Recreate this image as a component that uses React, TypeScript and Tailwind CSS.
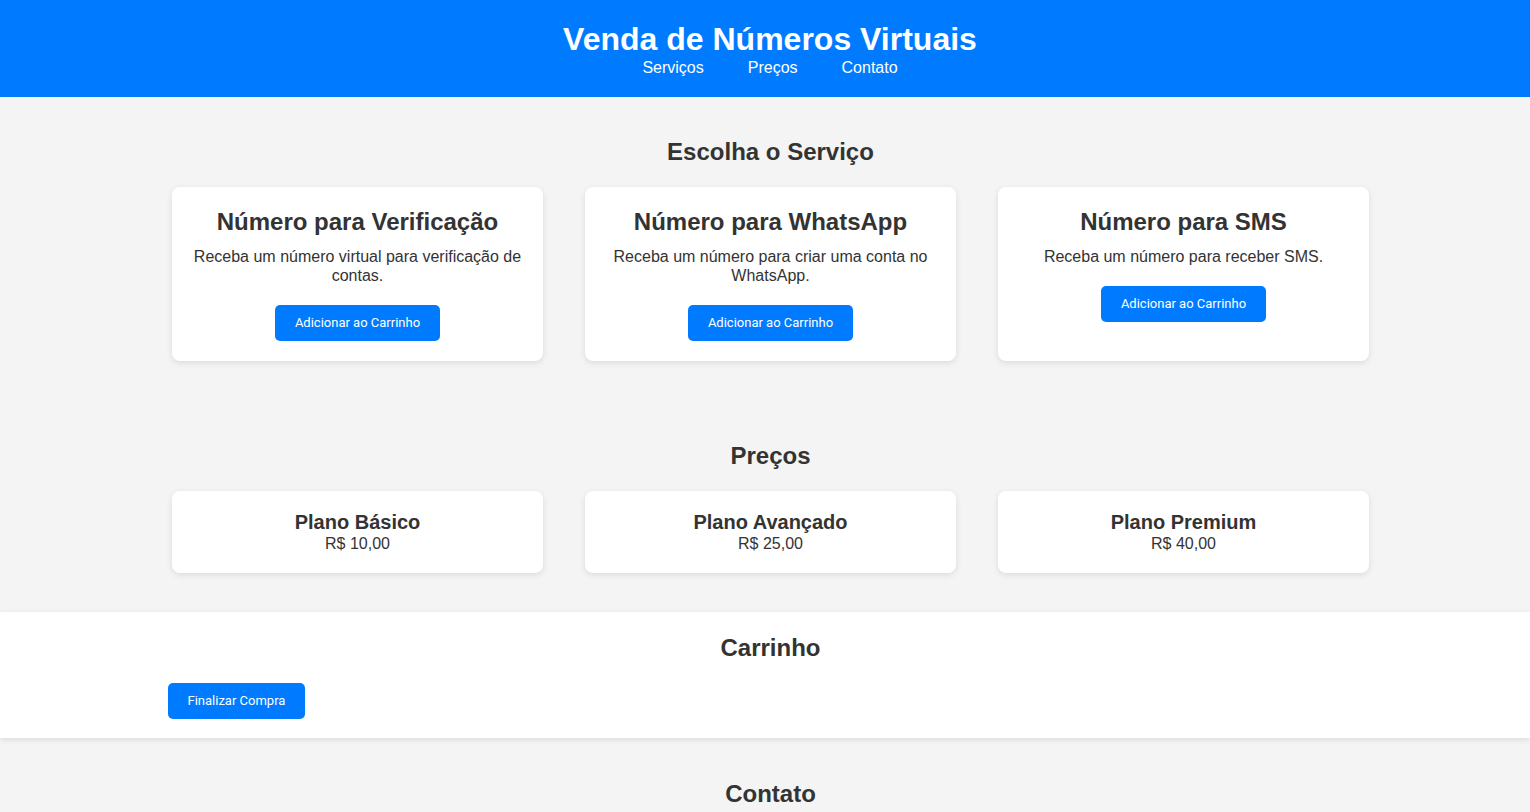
export default function App() {
  const services = [
    { title: "Número para Verificação", desc: "Receba um número virtual para verificação de contas." },
    { title: "Número para WhatsApp", desc: "Receba um número para criar uma conta no WhatsApp." },
    { title: "Número para SMS", desc: "Receba um número para receber SMS." },
  ]
  const plans = [
    { name: "Plano Básico", price: "R$ 10,00" },
    { name: "Plano Avançado", price: "R$ 25,00" },
    { name: "Plano Premium", price: "R$ 40,00" },
  ]

  return (
    <div className="min-h-screen bg-[#f4f4f4] text-[#333] font-['Liberation_Sans',Arial,sans-serif] pb-10">
      {/* Header */}
      <header className="bg-[#007bff] text-white pt-[21px] pb-5 pl-[10px] text-center">
        <h1 className="text-[32px] leading-[37px] font-bold">Venda de Números Virtuais</h1>
        <nav className="flex justify-center gap-[44px] text-base leading-[19px]">
          <a href="#servicos">Serviços</a>
          <a href="#precos">Preços</a>
          <a href="#contato">Contato</a>
        </nav>
      </header>

      {/* Serviços */}
      <section id="servicos" className="pt-10 pb-10 pl-[31px] pr-5 text-center">
        <h2 className="text-2xl leading-[28px] font-bold mt-px mb-[21px]">Escolha o Serviço</h2>
        <div className="flex justify-center gap-[42px]">
          {services.map((s) => (
            <div key={s.title} className="w-[371px] bg-white rounded-lg shadow-[0_2px_6px_rgba(0,0,0,0.1)] p-5 flex flex-col items-center">
              <h3 className="text-2xl leading-[28px] font-bold mt-px mb-[11px]">{s.title}</h3>
              <p className="text-base leading-[19px] mb-5">{s.desc}</p>
              <button className="h-9 px-5 bg-[#007bff] text-white rounded-[5px] text-[13px] font-['Roboto',sans-serif]">
                Adicionar ao Carrinho
              </button>
            </div>
          ))}
        </div>
      </section>

      {/* Preços */}
      <section id="precos" className="pt-10 pb-[39px] pl-[31px] pr-5 text-center">
        <h2 className="text-2xl leading-[28px] font-bold mt-px mb-[21px]">Preços</h2>
        <div className="flex justify-center gap-[42px]">
          {plans.map((p) => (
            <div key={p.name} className="w-[371px] bg-white rounded-lg shadow-[0_2px_6px_rgba(0,0,0,0.1)] p-5">
              <h3 className="text-xl leading-[23px] font-bold">{p.name}</h3>
              <p className="text-base leading-[19px]">{p.price}</p>
            </div>
          ))}
        </div>
      </section>

      {/* Carrinho */}
      <section id="carrinho" className="bg-white shadow-[0_2px_6px_rgba(0,0,0,0.1)] pt-[21px] pb-[19px] pl-[31px] pr-5 text-center">
        <h2 className="text-2xl leading-[28px] font-bold mt-px mb-[21px]">Carrinho</h2>
        <div className="w-[1206px] mx-auto text-left">
          <button className="h-9 px-5 bg-[#007bff] text-white rounded-[5px] text-[13px] font-['Roboto',sans-serif]">
            Finalizar Compra
          </button>
        </div>
      </section>

      {/* Contato */}
      <section id="contato" className="pt-[42px] pb-5 pl-[31px] pr-5 text-center">
        <h2 className="text-2xl leading-[28px] font-bold mb-[22px]">Contato</h2>
        <p className="text-base leading-[19px]">Entre em contato conosco pelo e-mail: contato@numerosvirtuais.com</p>
      </section>
    </div>
  )
}
